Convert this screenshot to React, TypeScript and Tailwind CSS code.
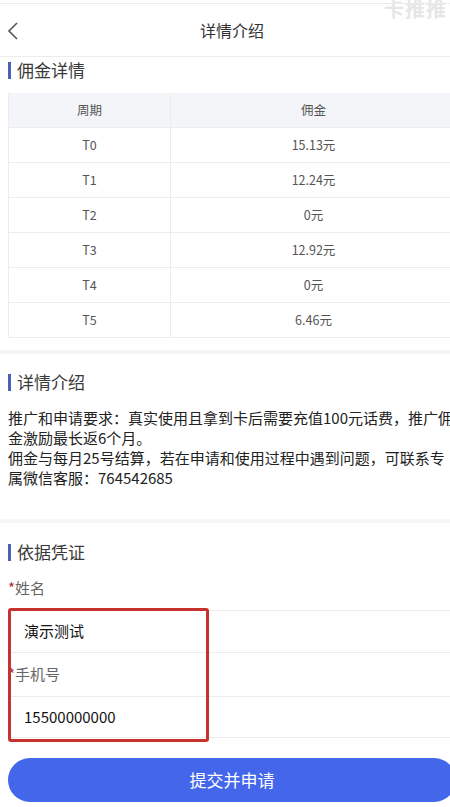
import React from "react";

const rows = [
  ["T0", "15.13元"],
  ["T1", "12.24元"],
  ["T2", "0元"],
  ["T3", "12.92元"],
  ["T4", "0元"],
  ["T5", "6.46元"],
];

function Heading({ text }: { text: string }) {
  return (
    <div className="flex items-center h-[26px] pl-[8px]">
      <div className="w-[3px] h-[17px] bg-[#4a5fb5]" />
      <div className="ml-[6px] text-[17px] leading-[26px] text-[#3a3a3a]">{text}</div>
    </div>
  );
}

export default function App() {
  return (
    <div
      className="w-[450px] h-[807px] overflow-hidden bg-white"
      style={{ fontFamily: '"Noto Sans CJK SC", "Noto Sans", sans-serif' }}
    >
      <div className="relative w-[464px] pt-[3px]">
        {/* watermark */}
        <div className="absolute left-[384px] top-[-3px] text-[20px] font-bold text-[#e6e6e6] tracking-[1px] leading-[24px]">
          卡推推
        </div>

        {/* header */}
        <div className="h-[54px] border-t border-b border-[#ececec] flex items-center relative">
          <div className="absolute left-[6px] top-[17px]">
            <svg width="14" height="20" viewBox="0 0 14 20" fill="none">
              <path d="M11 2 L3 10 L11 18" stroke="#555" strokeWidth="1.6" />
            </svg>
          </div>
          <div className="w-full text-center text-[16px] text-[#333]">详情介绍</div>
        </div>

        {/* section 1 */}
        <Heading text="佣金详情" />
        <div className="mt-[10px] ml-[8px] w-[448px] border-l border-[#ececec] text-[12.5px] text-[#555]">
          <div className="flex h-[35px] bg-[#f4f5f9] border-b border-[#ececec]">
            <div className="w-[162px] flex items-center justify-center border-r border-[#ececec]">周期</div>
            <div className="flex-1 flex items-center justify-center">佣金</div>
          </div>
          {rows.map(([a, b]) => (
            <div key={a} className="flex h-[35px] border-b border-[#ececec]">
              <div className="w-[162px] flex items-center justify-center border-r border-[#ececec]">{a}</div>
              <div className="flex-1 flex items-center justify-center">{b}</div>
            </div>
          ))}
        </div>
        <div className="mt-[12px] h-[4px] bg-[#f6f6f6]" />

        {/* section 2 */}
        <div className="mt-[15px]">
          <Heading text="详情介绍" />
        </div>
        <div className="mt-[13px] px-[8px] text-[15px] leading-[20px] text-[#222]">
          推广和申请要求：真实使用且拿到卡后需要充值100元话费，推广佣金激励最长返6个月。
          <br />
          佣金与每月25号结算，若在申请和使用过程中遇到问题，可联系专属微信客服：764542685
        </div>
        <div className="mt-[31px] h-[4px] bg-[#f6f6f6]" />

        {/* section 3 */}
        <div className="mt-[16px]">
          <Heading text="依据凭证" />
        </div>
        <div className="mt-[12px] pl-[8px] h-[22px] text-[15px] leading-[22px] text-[#666]">
          <span className="text-[#a83232]">*</span>姓名
        </div>
        <div className="mt-[11px] mx-[8px] h-[43px] border-t border-b border-[#ececec] flex items-center pl-[16px] text-[15px] text-[#111]">
          演示测试
        </div>
        <div className="mx-[8px] h-[43px] flex items-center text-[15px] text-[#666]">
          <span className="text-[#a83232]">*</span>手机号
        </div>
        <div className="mx-[8px] h-[42px] border-t border-b border-[#ececec] flex items-center pl-[16px] text-[15px] text-[#111]">
          15500000000
        </div>
        <div className="mt-[20px] mx-[8px] h-[44px] rounded-full bg-[#4466ea] flex items-center justify-center text-[17px] text-white">
          提交并申请
        </div>

        {/* red annotation box */}
        <div className="absolute left-[8px] top-[608px] w-[201px] h-[134px] border-[3px] border-[#c8322e] rounded-[3px]" />
      </div>
    </div>
  );
}
